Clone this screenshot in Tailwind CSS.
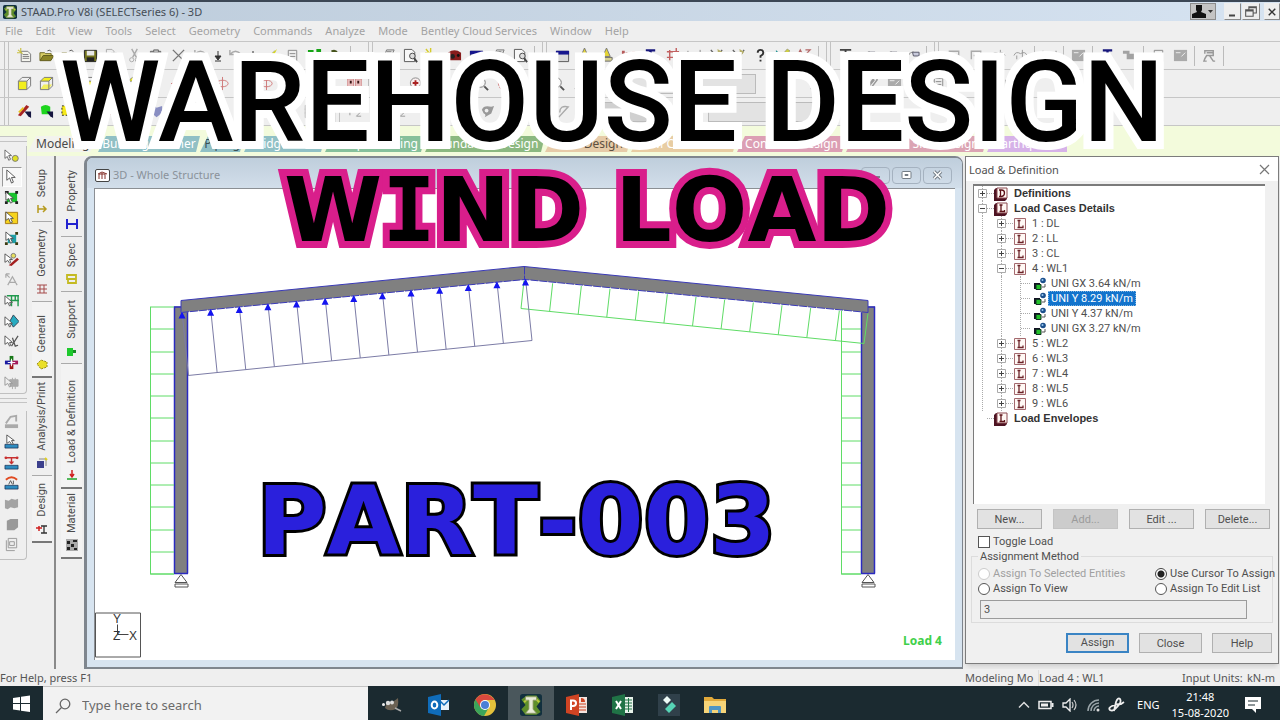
<!DOCTYPE html>
<html lang="en">
<head>
<meta charset="utf-8">
<title>STAAD.Pro V8i (SELECTseries 6) - 3D</title>
<script src="https://cdn.jsdelivr.net/npm/@tailwindcss/browser@4"></script>
</head>
<body class="bg-[#efefef]">
<svg class="hidden" aria-hidden="true">
  <symbol id="i-new" viewBox="0 0 16 16"><path d="M4.500 3.500h7l3 3v8h-10zM6 7h6M6 9h7M6 11h7" fill="#f4f4ee" stroke="#777"/><path d="M1 2l5 4M4 0v5M0 5h5" stroke="#c9c040" stroke-width="1.200"/></symbol>
  <symbol id="i-open" viewBox="0 0 16 16"><path d="M1 13V5h5l1 1h6v2" fill="#d9cf66" stroke="#6d6820"/><path d="M1 13.500 4.500 8H16l-3.500 5.500z" fill="#8d8626" stroke="#5f5a1b"/><path d="M9 3q3-2 4 1" stroke="#555" fill="none"/></symbol>
  <symbol id="i-save" viewBox="0 0 16 16"><path d="M1.500 2.500h13v12h-13z" fill="#74741d" stroke="#222"/><path d="M4 3h8v5H4z" fill="#e8e8e8"/><path d="M4 10h8v4H4z" fill="#222"/></symbol>
  <symbol id="i-copy" viewBox="0 0 16 16"><path d="M1.500 1.500h6l2 2v8h-8zM6.500 5.500h6l2 2v8h-8z" fill="#eee" stroke="#aaa"/></symbol>
  <symbol id="i-cut" viewBox="0 0 16 16"><path d="M5 1l5 9M11 1 6 10" stroke="#aaa" stroke-width="1.500"/><circle cx="5" cy="12.500" r="2.200" fill="none" stroke="#aaa"/><circle cx="11" cy="12.500" r="2.200" fill="none" stroke="#aaa"/></symbol>
  <symbol id="i-paste" viewBox="0 0 16 16"><path d="M1.500 3.500h11v11h-11z" fill="#888" stroke="#666"/><path d="M5 2h5v3H5z" fill="#bbb" stroke="#666"/></symbol>
  <symbol id="i-del" viewBox="0 0 16 16"><path d="M2 2l12 12M14 2 2 14" stroke="#777" stroke-width="1.500"/></symbol>
  <symbol id="i-undo" viewBox="0 0 16 16"><path d="M2 7q6-7 12 0t-6 6M2 2v5h5" fill="none" stroke="#aaa" stroke-width="1.500"/></symbol>
  <symbol id="i-down" viewBox="0 0 8 16"><path d="M4 3v6M1 8h6L4 12zM1 13h6" fill="#333" stroke="#333"/></symbol>
  <symbol id="i-wand" viewBox="0 0 16 16"><path d="M2 14 13 3" stroke="#bbb" stroke-width="2"/><path d="M9 6l6-5-3 6z" fill="#d8d820"/></symbol>
  <symbol id="i-doc" viewBox="0 0 16 16"><path d="M3.500 2.500h9v12h-9zM5 6h6M5 9h6" fill="#eee" stroke="#888"/></symbol>
  <symbol id="i-green" viewBox="0 0 16 16"><path d="M1 2h6v5H1zM10 1h5v5h-5zM1 9h5v5H1z" fill="#16a516"/><path d="M6 8h6v5" stroke="#333" fill="none"/></symbol>
  <symbol id="i-tool" viewBox="0 0 16 16"><path d="M2 3q5-3 8 2l5 8-3 2-5-8q-2 0-5-4z" fill="#46531d"/></symbol>
  <symbol id="i-print" viewBox="0 0 16 16"><path d="M4 7l2-5h8l-2 5M1.500 7.500h12v6h-12zM6 4h5" fill="#ddd" stroke="#777"/></symbol>
  <symbol id="i-prev" viewBox="0 0 16 16"><path d="M1.500 1.500h8l3 3v10h-11z" fill="#f8f8f8" stroke="#555"/><circle cx="10" cy="8.500" r="3" fill="#ddd" stroke="#444"/><path d="M12 11l3 4" stroke="#444" stroke-width="2"/></symbol>
  <symbol id="i-cam" viewBox="0 0 16 16"><path d="M1.500 6.500h13v7h-13z" fill="#ccc" stroke="#777"/><path d="M1 1l4 5M6 0v5M0 5h6" stroke="#d5cb2c" stroke-width="1.500"/><circle cx="9" cy="10" r="2" fill="#777"/></symbol>
  <symbol id="i-red" viewBox="0 0 16 16"><path d="M1 5q7-5 14 0v8H1z" fill="#871c1c"/><circle cx="6" cy="9" r="2.500" fill="#222"/><circle cx="12" cy="8" r="1.500" fill="#111"/></symbol>
  <symbol id="i-win" viewBox="0 0 16 16"><path d="M1.500 3.500h13v11h-13z" fill="#dadada" stroke="#555"/><path d="M1 3h14v4H1z" fill="#16168d"/></symbol>
  <symbol id="i-warn" viewBox="0 0 16 16"><path d="M8 0l4 9H4z" fill="#e5d536" stroke="#777"/><path d="M2 10h12v4H2z" fill="#d7d292" stroke="#666"/></symbol>
  <symbol id="i-dots" viewBox="0 0 16 16"><path d="M1 5h14M1 11h14" stroke="#c58080" stroke-dasharray="2 2"/><path d="M1 3h3v3H1zM12 4h3v3h-3z" fill="#b65b5b"/></symbol>
  <symbol id="i-hash" viewBox="0 0 16 16"><path d="M2 4h13M2 10h13M5 2v11M12 0v13" stroke="#c26060" stroke-width="1.500"/></symbol>
  <symbol id="i-rule" viewBox="0 0 16 16"><path d="M1 3v8M14 2v9M1 8h13" stroke="#888" fill="none"/><path d="M6 5l4 2-4 2z" fill="#888"/></symbol>
  <symbol id="i-pen" viewBox="0 0 16 16"><path d="M2 2l8 10M14 2 7 12" stroke="#666" stroke-width="1.500"/><path d="M9 1l5 3-4 5z" fill="#b7b06a"/></symbol>
  <symbol id="i-q" viewBox="0 0 16 16"><path d="M5 5q0-3 3-3t3 3q0 2-3 3.500V10.500M8 12.500v2" fill="none" stroke="#333" stroke-width="2"/></symbol>
  <symbol id="i-qbox" viewBox="0 0 16 16"><path d="M1.500 1.500h13v13h-13z" fill="#f6f6fb" stroke="#8a8a9a"/><path d="M5.500 6q0-2 2.500-2t2.500 2q0 1.500-2.500 2.500V10M8 11v1.500" fill="none" stroke="#334" stroke-width="1.500"/></symbol>
  <symbol id="i-teal" viewBox="0 0 16 16"><path d="M1 2v13h14z" fill="#2a9595"/><path d="M7 8l6-7 3 2-6 7z" fill="#cfcf44" stroke="#777" stroke-width=".5"/></symbol>
  <symbol id="i-az" viewBox="0 0 16 16"><path d="M1 7l2.500-5L6 7M9 2h5L9 7h5" fill="none" stroke="#b36666" stroke-width="1.300"/></symbol>
  <symbol id="i-beam" viewBox="0 0 16 16"><path d="M1 2h12M7 2v11M4 9l10 4" stroke="#444" stroke-width="2"/><path d="M9 5h6v5H9z" fill="#aeb2d2" stroke="#334"/></symbol>
  <symbol id="i-arc" viewBox="0 0 16 16"><path d="M2 13Q3 5 9 4" stroke="#888" fill="none"/><path d="M8 4.500h7v4H9z" fill="#c8cadb" stroke="#556"/></symbol>
  <symbol id="i-g1" viewBox="0 0 16 16"><path d="M2.500 12V3.500h10V9M5 8h8" fill="none" stroke="#aaa" stroke-width="1.500"/></symbol>
  <symbol id="i-g2" viewBox="0 0 16 16"><path d="M1 8q2-5 7-2 5-3 7 2M4 8v4M10 2v12" fill="none" stroke="#999"/></symbol>
  <symbol id="i-tray" viewBox="0 0 16 16"><path d="M1 3v4q7 5 14 0V3" fill="none" stroke="#aaa" stroke-width="1.500"/></symbol>
  <symbol id="i-gs" viewBox="0 0 16 16"><path d="M1 2h14v12H1z" fill="#aaa"/><path d="M3 5h5M9 9l4-4" stroke="#eee"/></symbol>
  <symbol id="i-ib" viewBox="0 0 16 16"><path d="M3 2.500h10M8 2v12M3 13.500h10" stroke="#17177c" stroke-width="2.500"/></symbol>
  <symbol id="i-bar" viewBox="0 0 16 16"><path d="M1 3h7v3H1zM5 6h10v6H5z" fill="#a2a2a2"/></symbol>
  <symbol id="i-r" viewBox="0 0 16 16"><path d="M3 6V3h9v5H5q-2 3-3 6h3M8 8l4 6h2M5 5h7" fill="none" stroke="#999" stroke-width="1.500"/></symbol>
  <symbol id="i-cubea" viewBox="0 0 16 16"><path d="M1.500 5.500h9v9h-9z" fill="#f2ee1e"/><path d="M1.500 5.500h9v9h-9zM1.500 5.500l4-4h9l-4 4M14.500 1.500v9l-4 4" fill="none" stroke="#777"/></symbol>
  <symbol id="i-cubeb" viewBox="0 0 16 16"><path d="M1.500 5.500l4-4h9l-4 4z" fill="#f2ee1e"/><path d="M5 9h9l-4 5H1.500z" fill="#f2ee1e" opacity=".7"/><path d="M1.500 5.500h9v9h-9zM1.500 5.500l4-4h9l-4 4M14.500 1.500v9l-4 4" fill="none" stroke="#777"/></symbol>
  <symbol id="i-rot" viewBox="0 0 16 16"><ellipse cx="8" cy="8" rx="6" ry="3.500" fill="none" stroke="#cf7777"/><path d="M8 1v14M0 8h5" stroke="#cf7777"/></symbol>
  <symbol id="i-face" viewBox="0 0 16 16"><path d="M0 3h7v9H0zM9 3h7v9H9z" fill="#e8bcbc" stroke="#c88"/><path d="M3 5h2v3H3zM11 5h2v3h-2z" fill="#311"/></symbol>
  <symbol id="i-zin" viewBox="0 0 16 16"><circle cx="8" cy="7.500" r="5.500" fill="#f8eeee" stroke="#888"/><path d="M8 4.500v6M5 7.500h6" stroke="#a22" stroke-width="2"/></symbol>
  <symbol id="i-mag" viewBox="0 0 16 16"><circle cx="7" cy="7" r="5" fill="#fafafa" stroke="#777"/><path d="M11 11l4 4" stroke="#555" stroke-width="2"/></symbol>
  <symbol id="i-redarc" viewBox="0 0 16 16"><path d="M5 2Q0 8 6 14M10 2q5 4 2 9" fill="none" stroke="#d08080" stroke-width="1.500" stroke-dasharray="4 1"/></symbol>
  <symbol id="i-bq" viewBox="0 0 16 16"><path d="M4 1h9v6l-4 3v5H6v-6l3-3H4z" fill="#3a6bb8" stroke="#8c2f5a"/></symbol>
  <symbol id="i-clip" viewBox="0 0 16 16"><path d="M2 12L9 3q3-2 4 1L7 12q-3 2-2-2l5-6" fill="none" stroke="#999" stroke-width="1.500"/></symbol>
  <symbol id="i-plus" viewBox="0 0 16 16"><path d="M6 2h4v4h5v4h-5v5H6v-5H1V6h5z" fill="#999"/></symbol>
  <symbol id="i-gfold" viewBox="0 0 16 16"><path d="M1 4h6l1 2h7v8H1z" fill="#aaa"/><path d="M3 9h12" stroke="#eee"/></symbol>
  <symbol id="i-sla" viewBox="0 0 16 16"><path d="M1 12 10 1l3 2-9 10z" fill="#a72323"/><path d="M2 9l5-5" stroke="#e6c11e" stroke-width="2"/><path d="M8 8h7v7l-3-2z" fill="#161640"/></symbol>
  <symbol id="i-blob" viewBox="0 0 16 16"><path d="M2 3q5-4 10 0v8H3z" fill="#1ed51e"/><path d="M8 8h7v7l-3-2z" fill="#161640"/></symbol>
  <symbol id="i-yel" viewBox="0 0 16 16"><path d="M1 2h10v10H1z" fill="#f5e81b" stroke="#222" stroke-dasharray="2 2"/><path d="M13 5v6M10 8h6" stroke="#222" stroke-width="2"/></symbol>
  <symbol id="i-grid" viewBox="0 0 16 16"><path d="M2.500 1.500h12v13h-12zM2 5.500h12M2 9.500h12M6.500 1v13" fill="#ddd" stroke="#888"/></symbol>
  <symbol id="i-bl" viewBox="0 0 16 16"><path d="M2 4q4-3 6 0l6-2q1 8-6 12-6-4-6-10z" fill="#8a8fc2"/></symbol>
  <symbol id="i-fx" viewBox="0 0 16 16"><path d="M2 3h5M2 3v9M2 7h4M9 8h5l-5 5h5" fill="none" stroke="#999"/></symbol>
  <symbol id="i-g3" viewBox="0 0 16 16"><path d="M2 6q2-5 10-3l3-1-3 8-7 4q2-3-1-4z" fill="#999"/><circle cx="7" cy="7" r="2" fill="#eee"/></symbol>
  <symbol id="i-pin" viewBox="0 0 16 16"><path d="M3 14 13 3q-9-2-9 6" fill="none" stroke="#aaa" stroke-width="1.500"/></symbol>

  <symbol id="c-cur" viewBox="0 0 16 16"><path d="M3 1v11l3-2.500L8 15l2-1-2-5h4z" fill="#fff" stroke="#555"/></symbol>
  <symbol id="c-node" viewBox="0 0 16 16"><path d="M1 1v9l2.500-2L5 12l2-1-2-4h3z" fill="#fff" stroke="#666"/><circle cx="12" cy="10" r="3.200" fill="#e0e024" stroke="#777"/></symbol>
  <symbol id="c-grn" viewBox="0 0 16 16"><path d="M3 3h11v10H3z" fill="#19c32e"/><path d="M1 1h4v3H1zM12 1h3v3h-3zM1 12h3v3H1zM12 12h3v3h-3z" fill="#222"/><path d="M2 2v9l3-2 2 5 2-1-2-4h3z" fill="#fff" stroke="#555"/></symbol>
  <symbol id="c-yel" viewBox="0 0 16 16"><path d="M1.500 2.500h13v12h-13z" fill="#f6d31d" stroke="#a67b15"/><path d="M2 2v9l3-2 2 5 2-1-2-4h3z" fill="#fff" stroke="#555"/></symbol>
  <symbol id="c-teal" viewBox="0 0 16 16"><path d="M4 4h9v9H4z" fill="#1e9fa6"/><path d="M12 1h3v3h-3zM1 12h3v3H1zM12 12h3v3h-3z" fill="#3b3b10"/><path d="M2 1v9l3-2 2 5 2-1-2-4h3z" fill="#fff" stroke="#555"/></symbol>
  <symbol id="c-red" viewBox="0 0 16 16"><path d="M5 14 14 6l2 2-8 7z" fill="#a32020"/><circle cx="10" cy="4" r="2.500" fill="#e6df5d" stroke="#777"/><path d="M1 2v9l3-2 2 3 1-1-1-3h3z" fill="#fff" stroke="#555"/></symbol>
  <symbol id="c-a" viewBox="0 0 16 16"><path d="M2 2l4 4M2 2h4M2 2v4M4 14l5-9 5 9M6 11h7" fill="none" stroke="#aaa" stroke-width="1.300"/></symbol>
  <symbol id="c-bar" viewBox="0 0 16 16"><path d="M3 3h13M6 8h10M8 3v11M12 3v5M15 3v11" fill="none" stroke="#219a4e" stroke-width="1.500"/><path d="M1 3v9l3-2 2 4 1-1-1-3h3z" fill="#fff" stroke="#555"/></symbol>
  <symbol id="c-dia" viewBox="0 0 16 16"><path d="M10 1l6 7-6 6-4-6z" fill="#27abc0" stroke="#345"/><path d="M1 3v9l3-2 2 4 1-1-1-3h3z" fill="#fff" stroke="#555"/></symbol>
  <symbol id="c-y" viewBox="0 0 16 16"><path d="M8 13 15 2M9 4l3 9 3-1" stroke="#555" fill="none" stroke-width="1.300"/><path d="M1 2v9l3-2 2 4 1-1-1-3h3z" fill="#fff" stroke="#555"/></symbol>
  <symbol id="c-plus" viewBox="0 0 16 16"><path d="M8 1v5" stroke="#187818" stroke-width="4"/><path d="M8 10v5" stroke="#a01616" stroke-width="4"/><path d="M1 8h6" stroke="#1a1aa0" stroke-width="4"/><path d="M9 8h6" stroke="#a31b5a" stroke-width="4"/><path d="M8 4v8M4 8h8" stroke="#fff"/></symbol>
  <symbol id="c-gry" viewBox="0 0 16 16"><path d="M6 5h9v7H6zM9 3v12M12 3v12" fill="#aaa" stroke="#aaa"/><path d="M1 2v9l3-2 2 4 1-1-1-3h3z" fill="#eee" stroke="#999"/></symbol>
  <symbol id="c-b1" viewBox="0 0 16 16"><path d="M1 11h14v4H1z" fill="#aaa"/><path d="M2 10 7 3l6-1v6" fill="none" stroke="#aaa" stroke-width="2"/></symbol>
  <symbol id="c-b2" viewBox="0 0 16 16"><path d="M1 11h14v4H1z" fill="#2e8cc0" stroke="#124" stroke-width=".7"/><path d="M3 1v9l3-2 2 3h2L8 7h3z" fill="#fff" stroke="#555"/></symbol>
  <symbol id="c-b3" viewBox="0 0 16 16"><path d="M1 11h14v4H1z" fill="#2e8cc0" stroke="#124" stroke-width=".7"/><path d="M2 3h12M8 3v6" stroke="#c83030" stroke-width="1.500"/><circle cx="2" cy="3" r="1.500" fill="#c83030"/><circle cx="14" cy="3" r="1.500" fill="#c83030"/><path d="M5 7h6l-3 3z" fill="#c83030"/></symbol>
  <symbol id="c-b4" viewBox="0 0 16 16"><path d="M1 11h14v4H1z" fill="#2e8cc0" stroke="#124" stroke-width=".7"/><path d="M2 5q6-5 12 0" fill="none" stroke="#e04a20" stroke-width="2"/><path d="M5 10l2-4 2 4M10 6v4" fill="none" stroke="#555"/></symbol>
  <symbol id="c-b5" viewBox="0 0 16 16"><path d="M1 4l4 1 3-2 4 1 3-1v9l-4 1-4-1-3 2-3-1z" fill="#a3a3a3"/></symbol>
  <symbol id="c-b6" viewBox="0 0 16 16"><path d="M3 4l4-2h8v9l-4 3H3z" fill="#999"/></symbol>
  <symbol id="c-b7" viewBox="0 0 16 16"><path d="M4.500 1.500h9v10h-9zM2.500 3.500v11h9" fill="#eee" stroke="#999"/><path d="M6 5h5v4H6z" fill="none" stroke="#999"/></symbol>

  <symbol id="t-app" viewBox="0 0 16 16"><rect width="16" height="16" rx="2" fill="#12303e"/><path d="M1 4l4-3h7l3 4-3 4 3 4-3 2H4l-3-4 3-3z" fill="#5f8f2a"/><path d="M3 6l3-3M11 3l3 3" stroke="#b9c93a" stroke-width="1.500"/><path d="M4 2h8v2.500H9.500v6.500l2.500 3H4l2.500-3V4.500H4z" fill="#e9ecd8" stroke="#8d9668" stroke-width=".6"/></symbol>
  <symbol id="t-case" viewBox="0 0 12 12"><path d="M.5.500h11v11H.500z" fill="#fff8f4" stroke="#a4696e"/><path d="M3.500 2.500h3M5 2.500v7M3.500 9.500h5.500v-2" fill="none" stroke="#6c2228" stroke-width="1.300"/></symbol>
  <symbol id="t-root" viewBox="0 0 14 14"><path d="M0 3v11h11l2-2V1H2z" fill="#4d1322"/><path d="M3 1h10v10H3z" fill="#fff8f4" stroke="#8c4a50"/><path d="M5.500 3h3M7 3v6.500M5.500 9.500h5V8" fill="none" stroke="#5c1218" stroke-width="1.300"/></symbol>
  <symbol id="t-def" viewBox="0 0 14 14"><path d="M0 3v11h11l2-2V1H2z" fill="#4d1322"/><path d="M3 1h10v10H3z" fill="#fff8f4" stroke="#8c4a50"/><path d="M5 3h2.500q3 0 3 3t-3 3.500H5M6.500 3v6.500" fill="none" stroke="#5c1218" stroke-width="1.300"/></symbol>
  <symbol id="t-leaf" viewBox="0 0 14 14"><path d="M1 6h6v6H1z" fill="#112"/><path d="M3 7.500h5v5H3z" fill="#23c02b" stroke="#132"/><circle cx="10" cy="3.500" r="2.800" fill="#1b4f8c"/><circle cx="9.500" cy="3" r="1" fill="#9cc9ef"/><path d="M12 7v3H9" fill="none" stroke="#555"/></symbol>
</svg>

<div class="relative flex min-h-screen flex-col overflow-hidden bg-[#efefef] font-['Noto_Sans','Open_Sans',sans-serif] text-[#3c3c3c]">

  <header class="flex h-[21px] items-center border-t-2 border-[#3c4755] bg-linear-to-r from-[#bccbda] to-[#d6e3f1] pl-[3px]">
    <svg class="size-[14px]"><use href="#t-app"/></svg>
    <h1 class="ml-1 grow text-[11px] leading-4 text-[#454d56]">STAAD.Pro V8i (SELECTseries 6) - 3D</h1>
    <button aria-label="Account" class="mr-2 flex h-[17px] w-[26px] items-center border border-[#8d8d8d] bg-[#c4c4c4]"><svg viewBox="0 0 24 15" class="h-[15px] w-6"><path d="M5 1h6v5l-1 2 5 2v4H1v-4l5-2-1-2z" fill="#111"/><path d="M17 6h5l-2.500 3z" fill="#333"/></svg></button>
    <button aria-label="Minimise" class="h-[17px] w-[17px] border border-t-[#eee] border-r-[#888] border-b-[#888] border-l-[#eee] bg-[#eee]"><svg viewBox="0 0 15 15"><path d="M4 11.500h6" stroke="#444" stroke-width="2"/></svg></button>
    <button aria-label="Restore" class="mr-1 ml-px h-[17px] w-[18px] border border-t-[#eee] border-r-[#888] border-b-[#888] border-l-[#eee] bg-[#eee]"><svg viewBox="0 0 15 15"><path d="M5.500 5V2.500h7v6H10M2.500 5.500h7v6h-7zM3 6.500h6M6 3.500h6" fill="none" stroke="#555"/></svg></button>
    <button aria-label="Close" class="h-[17px] w-[16px] border border-t-[#eee] border-r-[#888] border-b-[#888] border-l-[#eee] bg-[#eee]"><svg viewBox="0 0 15 15"><path d="M4 4l7 7M11 4l-7 7" stroke="#333" stroke-width="1.500"/></svg></button>
  </header>

  <nav class="flex h-[21px] items-center gap-[13px] border-b border-[#c6c6c6] pl-[5px] text-[11px] leading-4 text-[#a3a3a3]">
    <button>File</button><button>Edit</button><button>View</button><button>Tools</button><button>Select</button><button>Geometry</button><button>Commands</button><button>Analyze</button><button>Mode</button><button>Bentley Cloud Services</button><button>Window</button><button>Help</button>
  </nav>

  <div id="bars"></div>

  <nav class="flex h-[30px] items-end bg-[#f3fbdc] pb-1 pl-[28px] text-[12px] leading-4 text-white">
    <button class="w-[70px] bg-[#f3f3ee] pl-2 text-left text-[#4a4a4a] [clip-path:polygon(8px_0,100%_0,calc(100%-8px)_100%,0_100%)]">Modeling</button>
    <button class="w-[102px] bg-[#90c0c5] [clip-path:polygon(8px_0,100%_0,calc(100%-4px)_100%,0_100%)]">Building Planner</button>
    <button class="w-[44px] bg-[#90c0c5] text-[#3c5054] [clip-path:polygon(8px_0,100%_0,calc(100%-4px)_100%,0_100%)]">Piping</button>
    <button class="w-[81px] bg-[#90c0c5] [clip-path:polygon(8px_0,100%_0,calc(100%-4px)_100%,0_100%)]">Bridge Deck</button>
    <button class="w-[100px] bg-[#86c09b] [clip-path:polygon(8px_0,100%_0,calc(100%-4px)_100%,0_100%)]">Postprocessing</button>
    <button class="w-[120px] bg-[#8bb880] [clip-path:polygon(8px_0,100%_0,calc(100%-4px)_100%,0_100%)]">Foundation Design</button>
    <button class="w-[86px] bg-[#e6cba8] text-[#5d5040] [clip-path:polygon(8px_0,100%_0,calc(100%-4px)_100%,0_100%)]">Steel Design</button>
    <button class="w-[106px] bg-[#e8cda3] [clip-path:polygon(8px_0,100%_0,calc(100%-4px)_100%,0_100%)]">RAM Connection</button>
    <button class="w-[109px] bg-[#dc9fb4] [clip-path:polygon(8px_0,100%_0,calc(100%-4px)_100%,0_100%)]">Concrete Design</button>
    <button class="w-[141px] bg-[#dba4b3] [clip-path:polygon(8px_0,100%_0,calc(100%-4px)_100%,0_100%)]">Advanced Slab Design</button>
    <button class="w-[80px] bg-[#d6b2e8] [clip-path:polygon(8px_0,100%_0,100%_100%,0_100%)]">Earthquake</button>
  </nav>

  <main class="flex grow">
    <aside class="-mt-[20px] w-[27px] shrink-0">
      <div class="border-t border-[#c4c4c4] bg-[#efefef]"><div class="mt-1 h-[5px] border-t border-[#c4c4c4]"></div></div>
      <div id="tools1" class="flex h-[248px] flex-col items-center justify-between rounded-br border-r border-b border-[#c0c0c0] bg-[#efefef] pr-[3px]"></div>
      <div class="mt-1 h-[5px] border-y border-[#c4c4c4]"></div>
      <div id="tools2" class="mt-2 flex h-[149px] flex-col items-center justify-between rounded-br border-r border-b border-[#c0c0c0] pr-[3px] pb-1"></div>
    </aside>

    <nav id="tabsA" class="flex w-[29px] shrink-0 flex-col border-r-2 border-[#8a8a8a] pt-1 pr-0.5 pl-[5px]"></nav>
    <nav id="tabsB" class="flex w-[28px] shrink-0 flex-col pt-0.5 pr-0.5 pl-[5px]"></nav>

    <section class="flex grow flex-col rounded-t-lg border-t-2 border-r border-b-2 border-l-[3px] border-[#7f868e] bg-[#d7e4f0] px-[7px] pb-[7px]">
      <header class="-mx-[7px] flex h-[30px] items-center rounded-t-md bg-linear-to-b from-[#bfcedc] to-[#d2deea] pt-1 pr-[10px] pl-[8px] text-[11px] text-[#8a929a]">
        <svg viewBox="0 0 15 13" class="mr-[3px] h-[13px] w-[15px]"><rect x=".5" y=".5" width="14" height="12" rx="1.500" fill="#fff" stroke="#444"/><path d="M4 10V5h6v5M7 4v6M3 5l4-2 5 2" fill="none" stroke="#84302a"/></svg>
        <h2 class="grow">3D - Whole Structure</h2>
        <div class="flex gap-0.5">
          <button aria-label="Minimise view" class="h-[17px] w-[29px] rounded-sm border border-[#a5b2c0]"><svg viewBox="0 0 27 15"><path d="M10 9h8" stroke="#7a838c" stroke-width="2"/></svg></button>
          <button aria-label="Maximise view" class="h-[17px] w-[29px] rounded-sm border border-[#a5b2c0]"><svg viewBox="0 0 27 15"><rect x="9" y="3.500" width="9" height="7" rx="1" fill="#fff" stroke="#737c85"/><path d="M12 6.500h3v1h-3z" stroke="#737c85"/></svg></button>
          <button aria-label="Close view" class="h-[17px] w-[29px] rounded-sm border border-[#a5b2c0]"><svg viewBox="0 0 27 15"><path d="M10 3.500l7 7M17 3.500l-7 7" stroke="#737c85" stroke-width="3.500"/><path d="M10 3.500l7 7M17 3.500l-7 7" stroke="#fff" stroke-width="1.500"/></svg></button>
        </div>
      </header>
      <div class="grow border-t border-l border-[#8b8f94] bg-white">
        <svg id="model" viewBox="95 189 860 470" class="block h-full w-full" role="img" aria-label="Portal frame with wind load">
          <path d="M174 306h14v267h-14zM861 306h14v267h-14z" fill="#808080"/>
          <path d="M174.500 306v267M187.500 312v261M861.500 312v261M874.500 306v267M174 306.500h7M868 306.500h7M174 573h14M861 573h14" stroke="#2a2ac0" stroke-width="1.500"/>
          <path d="M181 300 524 266 868 300v12L525 279 181 312z" fill="#808080"/>
          <path d="M181 312V300L524 266 868 300v12" fill="none" stroke="#3a3ab8"/>
          <path d="M181 312 525 279 868 312M524.500 266v13" fill="none" stroke="#3a3ab8" stroke-dasharray="8 1"/>
          <g id="loads" fill="none"></g>
          <g fill="#fff" stroke="#555"><path d="M181 574l6 8h-12zM175 583.500h13v3h-13zM868 574l6 8h-12zM862 583.500h13v3h-13z"/></g>
          <path d="M95.500 612.500h45v44h-45z" fill="#fff" stroke="#555"/>
          <path d="M117.500 624v10h11" fill="none" stroke="#444"/>
          <g fill="#333" font-family="Liberation Sans" font-size="12"><text x="113" y="622">Y</text><text x="113" y="639">Z</text><text x="129" y="639">X</text></g>
          <text x="903" y="644" fill="#3fd04a" font-family="Noto Sans" font-weight="700" font-size="12">Load 4</text>
        </svg>
      </div>
    </section>

    <section class="mr-px mb-[5px] ml-0.5 flex w-[314px] shrink-0 flex-col border border-[#7c7c7c] bg-[#f0f0f0] font-['Roboto',Arial,sans-serif] text-[11px] leading-[15px] text-[#4f4f4f] shadow-md">
      <header class="flex h-6 items-center justify-between bg-white pr-2 pl-[3px] font-['Noto_Sans',sans-serif]">
        <h2>Load &amp; Definition</h2>
        <button aria-label="Close panel" class="size-[11px]"><svg viewBox="0 0 11 11"><path d="M1 1l9 9M10 1l-9 9" stroke="#777" stroke-width="1.200"/></svg></button>
      </header>
      <div class="mt-[3px] mr-[13px] ml-[7px] h-[320px] border-t-2 border-l border-[#7b7b7b] bg-white pl-1">
        <ul id="tree"></ul>
      </div>
      <div class="mt-[5px] mr-2 ml-[11px] flex justify-between">
        <button class="h-5 w-[65px] border border-[#b0b0b0] bg-[#e2e2e2]">New...</button>
        <button disabled class="h-5 w-[65px] border border-[#c4c4c4] bg-[#cccccc] text-[#9b9b9b]">Add...</button>
        <button class="h-5 w-[65px] border border-[#b0b0b0] bg-[#e2e2e2]">Edit ...</button>
        <button class="h-5 w-[65px] border border-[#b0b0b0] bg-[#e2e2e2]">Delete...</button>
      </div>
      <label class="mt-[5px] ml-3 flex h-[15px] items-center gap-[3px]"><input type="checkbox" class="size-3 appearance-none border border-[#555] bg-white">Toggle Load</label>
      <fieldset class="mr-[5px] ml-[5px] min-w-0 border border-[#dcdcdc] pb-[3px] pl-[6px]">
        <legend class="px-0.5">Assignment Method</legend>
        <div class="mt-0.5 grid grid-cols-[177px_1fr]">
          <label class="flex items-center gap-[3px] whitespace-nowrap text-[#a0a0a0]"><input type="radio" name="m" disabled class="size-3 appearance-none rounded-full border border-[#ccc] bg-white">Assign To Selected Entities</label>
          <label class="flex items-center gap-[3px] whitespace-nowrap"><input type="radio" name="m" checked class="size-3 appearance-none rounded-full border border-[#444] bg-[radial-gradient(circle,#222_3px,white_4px)]">Use Cursor To Assign</label>
          <label class="flex items-center gap-[3px] whitespace-nowrap"><input type="radio" name="m" class="size-3 appearance-none rounded-full border border-[#555] bg-white">Assign To View</label>
          <label class="flex items-center gap-[3px] whitespace-nowrap"><input type="radio" name="m" class="size-3 appearance-none rounded-full border border-[#555] bg-white">Assign To Edit List</label>
        </div>
        <input aria-label="Members" value="3" class="mt-1 ml-0.5 block h-[19px] w-[267px] border border-[#9b9b9b] bg-[#ededed] px-[3px]">
      </fieldset>
      <div class="mt-[10px] mr-[6px] flex justify-end gap-[10px]">
        <button class="h-5 w-[63px] border-2 border-[#3a84c4] bg-[#e2e2e2] leading-4">Assign</button>
        <button class="h-5 w-[63px] border border-[#b0b0b0] bg-[#e2e2e2]">Close</button>
        <button class="h-5 w-[60px] border border-[#b0b0b0] bg-[#e2e2e2]">Help</button>
      </div>
    </section>
  </main>

  <footer class="flex h-[17px] items-center bg-[#efefef] text-[11px] leading-4 text-[#555]">
    <span class="grow">For Help, press F1</span>
    <span class="w-[69px] overflow-hidden whitespace-nowrap">Modeling Mo</span>
    <span class="ml-1 w-[144px] border-l border-[#ddd]">Load 4 : WL1</span>
    <span class="w-[65px] whitespace-nowrap">Input Units:</span>
    <span class="w-[33px] whitespace-nowrap">kN-m</span>
  </footer>

  <footer class="flex h-[34px] items-stretch bg-[#1b2a30] text-white">
    <button aria-label="Start" class="flex w-[43px] items-center justify-center"><svg viewBox="0 0 17 17" class="size-[17px]"><path d="M0 3l7-1v6H0zM8 1.800 17 .5V8H8zM0 9h7v6.500l-7-1zM8 9h9v8l-9-1.300z" fill="#fff"/></svg></button>
    <label class="flex w-[325px] items-center border-t border-[#c4c4c4] bg-[#f2f2f2] pt-1 pl-3">
      <svg viewBox="0 0 16 16" class="size-4"><circle cx="10" cy="6" r="4.800" fill="none" stroke="#666" stroke-width="1.300"/><path d="M6.500 9.500 1 15" stroke="#666" stroke-width="1.300"/></svg>
      <input aria-label="Search" placeholder="Type here to search" class="ml-[11px] grow bg-transparent text-[13px] placeholder:text-[#6b6b6b]">
    </label>
    <div class="flex grow">
      <button aria-label="GIMP" class="flex w-[48px] items-center justify-center pt-1"><svg viewBox="0 0 22 16" class="h-4 w-[22px]"><path d="M6 5q4 2 11-4 1 8-2 11-7 3-11-1z" fill="#6b6153"/><circle cx="7" cy="6" r="2.200" fill="#ddd"/><circle cx="11" cy="5.500" r="2" fill="#ddd"/><circle cx="2.500" cy="7.500" r="1.500" fill="#eee"/><path d="M14 11l6 3" stroke="#aaa" stroke-width="1.500"/></svg></button>
      <button aria-label="Outlook" class="flex w-[46px] items-center justify-center pt-1"><svg viewBox="0 0 22 22" class="size-[22px]"><path d="M11 6h10v10H11z" fill="#e8f2fa"/><path d="M11 6l5 5 5-5" fill="none" stroke="#0f6cba" stroke-width="1.500"/><path d="M0 3l13-3v22L0 19z" fill="#0f6cba"/><ellipse cx="6.500" cy="11" rx="2.800" ry="3.500" fill="none" stroke="#fff" stroke-width="2"/></svg></button>
      <button aria-label="Chrome" class="flex w-[46px] items-center justify-center pt-1"><svg viewBox="0 0 22 22" class="size-[22px]"><circle cx="11" cy="11" r="11" fill="#e3c13b"/><path d="M11 11 1.500 5.500A11 11 0 0 0 10 22l5-8.700z" fill="#3ba45b"/><path d="M1.500 5.500A11 11 0 0 1 20.500 6H11l-4.500 7.500z" fill="#d9493e"/><circle cx="11" cy="11" r="5" fill="#fff"/><circle cx="11" cy="11" r="4" fill="#4b7fd6"/></svg></button>
      <button aria-label="STAAD.Pro" class="flex w-[46px] items-center justify-center bg-[#4a575c] pt-1"><svg class="size-[22px]"><use href="#t-app"/></svg></button>
      <button aria-label="PowerPoint" class="flex w-[46px] items-center justify-center pt-1"><svg viewBox="0 0 22 22" class="size-[22px]"><path d="M11 3h10v16H11z" fill="#f3e4df"/><path d="M13 10h7M13 13h7M13 16h7" stroke="#d04423"/><path d="M15 4v4h4a4 4 0 0 0-4-4z" fill="#d04423"/><path d="M0 3l13-3v22L0 19z" fill="#d04423"/><path d="M5 16V6.500h2q3 0 3 2.700T7 12H5" fill="none" stroke="#fff" stroke-width="2"/></svg></button>
      <button aria-label="Excel" class="flex w-[46px] items-center justify-center pt-1"><svg viewBox="0 0 22 22" class="size-[22px]"><path d="M11 3h10v16H11z" fill="#e8f2ea"/><path d="M13 6h7M13 9h7M13 12h7M13 15h7M16.500 4v14" stroke="#207346"/><path d="M0 3l13-3v22L0 19z" fill="#207346"/><path d="M4 7l5 8M9 7l-5 8" stroke="#fff" stroke-width="2"/></svg></button>
      <button aria-label="Filmora" class="flex w-[46px] items-center justify-center pt-1"><svg viewBox="0 0 22 22" class="size-[22px]"><path d="M0 0h22v22H0z" fill="#30404a"/><path d="M5 6l4-4 4 4-4 4z" fill="#eefaf6"/><path d="M7 15l7-7 4 4-7 7z" fill="#57d3b5"/></svg></button>
      <button aria-label="File Explorer" class="flex w-[46px] items-center justify-center pt-1"><svg viewBox="0 0 22 18" class="h-[18px] w-[22px]"><path d="M0 1h8l2 2h12v14H0z" fill="#e2a93a"/><path d="M0 5h22v12H0z" fill="#f6d478"/><path d="M5 17v-6q0-1 1-1h10q1 0 1 1v6h-3v-3H8v3z" fill="#4f95c4"/></svg></button>
    </div>
    <div class="flex items-center gap-2 pt-1 pr-[19px] text-[12px] leading-4">
      <svg viewBox="0 0 12 12" class="size-3"><path d="M1 8.500l5-5 5 5" fill="none" stroke="#ddd" stroke-width="1.500"/></svg>
      <svg viewBox="0 0 16 10" class="h-[10px] w-4"><path d="M1 1.500h12v7H1z" fill="none" stroke="#eee" stroke-width="1.500"/><path d="M3 3.500h7v3H3z" fill="#eee"/><path d="M14.500 3v4" stroke="#eee" stroke-width="2"/></svg>
      <svg viewBox="0 0 16 14" class="h-[14px] w-4"><path d="M1 5h3l4-4v12L4 9H1z" fill="none" stroke="#eee" stroke-width="1.300"/><path d="M10 4q2 3 0 6M12 2q4 5 0 10" fill="none" stroke="#ccc" stroke-width="1.200"/></svg>
      <svg viewBox="0 0 14 14" class="size-[14px]"><path d="M2 13A11 11 0 0 1 13 2M5 13a8 8 0 0 1 8-8M8 13a5 5 0 0 1 5-5" fill="none" stroke="#9aa5a9" stroke-width="1.500"/><circle cx="12" cy="12" r="1.500" fill="#ddd"/></svg>
      <svg viewBox="0 0 17 16" class="h-4 w-[17px]"><path d="M6 14l2-9q2-5 4-3 2 3-3 8-4 5-7 3-2-2 2-4t9-2l3-2" fill="none" stroke="#eee" stroke-width="1.800"/></svg>
      <span class="ml-1 text-[11px]">ENG</span>
      <span class="ml-1 text-center text-[11px]"><time class="block">21:48</time><time class="block">15-08-2020</time></span>
      <svg viewBox="0 0 16 16" class="ml-2 size-4"><path d="M0 0h16v12h-5v4l-4-4H0z" fill="#fff"/><path d="M3 4h10M3 8h7" stroke="#1b2a30"/></svg>
    </div>
  </footer>

  <p class="pointer-events-none absolute top-[47px] left-[60px] text-[114px] leading-[110px] font-medium whitespace-nowrap text-black font-['Roboto',sans-serif] [paint-order:stroke_fill] [-webkit-text-stroke:16px_white] [stroke-linejoin:round]">WAREHOUSE DESIGN</p>
  <p class="pointer-events-none absolute top-[155px] left-[284px] text-[89px] leading-[110px] font-bold whitespace-nowrap text-black font-['DejaVu_Sans',sans-serif] [font-kerning:none] [paint-order:stroke_fill] [-webkit-text-stroke:14px_#d91e8b] [stroke-linejoin:round]">W<span class="font-['DejaVu_Sans_Mono',monospace]">I</span>ND LOAD</p>
  <p class="pointer-events-none absolute top-[466px] left-[257px] text-[95px] leading-[110px] font-bold whitespace-nowrap text-[#2a20dc] font-['DejaVu_Sans',sans-serif] [font-kerning:none] [paint-order:stroke_fill] [-webkit-text-stroke:6px_black] [stroke-linejoin:round]">PART-003</p>
</div>

<script>
const icon = (id, cls) => `<svg class="${cls}" viewBox="0 0 16 16"><use href="#${id}"/></svg>`;
const grip = '<span class="mx-1 flex w-[5px] justify-between self-stretch border-x border-[#c2c2c2]"></span>';
const sep = '<span class="mx-[3px] h-5 w-px bg-[#bbb]"></span>';
const combo = '<select aria-label="Value" class="mx-1 h-5 w-[130px] appearance-none border border-[#bbb] bg-[#e3e3e3]"></select>';
const small = '<select aria-label="Load case" class="mx-1 h-5 w-[80px] appearance-none border border-[#bbb] bg-[#d0d0d0]"></select>';
const gap = '<span class="w-[22px] shrink-0"></span>';
const half = '<span class="w-[10px] shrink-0"></span>';
const rows = [
  '# new open open save copy cut paste del undo down redo down wand doc green tool | . # print prev cam red win print prev | # win warn warn dots ib hash rule pen pen q teal az | # beam arc arc arc | # g1 g1 g2 g2 | tray | gs | ib bar | doc gs | r |',
  '# cubea cubeb cubea cubea cubeb cubeb _ rot rot rot rot rot _ red _ face | zin . zin _ _ mag redarc _ . mag pin _ . = bq _ pin _ # clip gs plus doc | pin gfold gfold',
  '# sla blob yel yel sla _ bl bl _ _ _ _ _ grid . # fx _ fx _ _ g3 g3 _ . pin pin . - . qbox = g3'
];
document.getElementById('bars').innerHTML = rows.map(r =>
  '<div class="flex h-7 items-center overflow-hidden border-b border-[#c6c6c6]">' + r.split(' ').map(t =>
    t === '#' ? grip : t === '|' ? sep : t === '=' ? combo : t === '-' ? small : t === '_' ? gap : t === '.' ? half :
    t === 'down' ? '<button aria-label="More" class="w-[13px] shrink-0"><svg class="mx-auto h-4 w-2"><use href="#i-down"/></svg></button>' :
    `<button aria-label="${t}" class="w-[22px] shrink-0">${icon(t === 'redo' ? 'i-undo' : 'i-' + t, 'mx-auto size-[15px]')}</button>`
  ).join('') + '</div>').join('');

const tools = (el, list) => document.getElementById(el).innerHTML = list.split(' ').map(t =>
  `<button aria-label="${t}" class="${t === 'cur' ? 'flex size-5 items-center justify-center border border-t-[#999] border-l-[#999] border-r-white border-b-white bg-[#f7f7f7]' : 'flex size-5 items-center justify-center'}">${icon('c-' + t, 'size-[15px]')}</button>`).join('');
tools('tools1', 'node cur grn yel teal red a bar dia y plus gry');
tools('tools2', 'b1 b2 b3 b4 b5 b6 b7');

const tab = ([label, h, art, on]) => `<button class="${on ? 'flex flex-col items-center justify-end gap-[6px] border-b-2 border-[#777] bg-[#f3f3f3] pb-[6px]' : 'flex flex-col items-center justify-end gap-[6px] border-b border-[#aaa] pb-[6px]'}" style="height:${h}px"><span class="rotate-180 text-[11px] leading-4 whitespace-nowrap text-[#4a4a4a] [writing-mode:vertical-rl] font-['Roboto',sans-serif]">${label}</span><svg viewBox="0 0 12 12" class="size-3 shrink-0">${art}</svg></button>`;
document.getElementById('tabsA').innerHTML = [
  ['Setup', 62, '<path d="M2 2v8M2 6h8M7 3l3 3-3 3" fill="none" stroke="#b69a1e" stroke-width="1.500"/>'],
  ['Geometry', 80, '<path d="M1 2h10M1 10h10M4 2v8M8 2v8M1 6h10" stroke="#a54a4a"/>'],
  ['General', 76, '<path d="M1 6l4-4 6 2v5l-6 2z" fill="#eadf28" stroke="#998d1b" stroke-dasharray="2 1"/>', 1],
  ['Analysis/Print', 98, '<path d="M1 4h7v7H1z" fill="#3b3f8c"/><path d="M3 2h7v7" fill="none" stroke="#888"/><path d="M9 1l2 2" stroke="#dfcf20" stroke-width="2"/>'],
  ['Design', 67, '<path d="M5 10h6M8 3v7M5 3h6" stroke="#333" stroke-width="1.300"/><path d="M0 5h6M3 3v5" stroke="#d02020" stroke-width="1.500"/>', 1]
].map(tab).join('');
document.getElementById('tabsB').innerHTML = [
  ['Property', 79, '<path d="M1 1v10M11 1v10M1 6h10" stroke="#2323d0" stroke-width="2"/>'],
  ['Spec', 55, '<path d="M1 2h9v4H1zM2 6h8v4H2z" fill="none" stroke="#c4ba22" stroke-width="1.800"/>'],
  ['Support', 72, '<path d="M1 3h6v8H1z" fill="#1ec92d"/><path d="M7 5h3v3H7z" fill="#188f24"/>'],
  ['Load &amp; Definition', 125, '<path d="M1 10h10" stroke="#1ea52a" stroke-width="1.500"/><path d="M6 1v6M4 5l2 3 2-3" stroke="#d02020" stroke-width="1.500" fill="none"/>', 1],
  ['Material', 70, '<path d="M0 0h12v12H0z" fill="#aaa"/><path d="M1 2h3v3H1zM7 1h4v2H7zM5 5h3v3H5zM1 8h3v3H1zM8 9h3v2H8z" fill="#222"/>', 1]
].map(tab).join('');

/* load tree */
const exp = s => `<span class="flex w-[9px] shrink-0 flex-col items-center self-stretch"><i class="grow border-l border-dotted border-[#aaa]"></i><svg viewBox="0 0 9 9" class="size-[9px]"><path d="M.5.500h8v8h-8z" fill="#fff" stroke="#aaa"/><path d="${s === '+' ? 'M2 4.500h5M4.500 2v5' : 'M2 4.500h5'}" stroke="#444"/></svg><i class="grow border-l border-dotted border-[#aaa]"></i></span>`;
const dash = '<i class="w-[7px] shrink-0 border-t border-dotted border-[#aaa]"></i>';
const root = (s, ic, t) => `<div class="flex h-[15px] items-center">${s ? exp(s) : '<i class="w-[9px]"></i>'}${dash}<svg class="size-[14px] shrink-0"><use href="#${ic}"/></svg><b class="ml-[6px] text-[#333] font-['Liberation_Sans',Arial,sans-serif]">${t}</b></div>`;
const item = (s, t) => `<div class="flex h-[15px] items-center">${exp(s)}${dash}<svg class="ml-px size-3 shrink-0"><use href="#t-case"/></svg><span class="ml-[6px]">${t}</span></div>`;
const leaf = (t, on) => `<li class="flex h-[15px] items-center"><i class="w-[9px] shrink-0 border-t border-dotted border-[#aaa]"></i><svg class="ml-[3px] size-[14px] shrink-0"><use href="#t-leaf"/></svg><span class="${on ? 'ml-px bg-[#1273cc] px-[3px] text-white outline outline-dotted outline-[#7fb3e0] -outline-offset-1' : 'ml-1'}">${t}</span></li>`;
document.getElementById('tree').innerHTML =
  `<li>${root('+', 't-def', 'Definitions')}</li><li>${root('-', 't-root', 'Load Cases Details')}<ul class="ml-1 border-l border-dotted border-[#aaa] pl-[14px]">` +
  ['1 : DL', '2 : LL', '3 : CL'].map(t => `<li>${item('+', t)}</li>`).join('') +
  `<li>${item('-', '4 : WL1')}<div class="ml-1 border-l border-dotted border-[#aaa] pl-[18px]"><ul class="border-l border-dotted border-[#aaa]">` +
  leaf('UNI GX 3.64 kN/m') + leaf('UNI Y 8.29 kN/m', 1) + leaf('UNI Y 4.37 kN/m') + leaf('UNI GX 3.27 kN/m') + '</ul></div></li>' +
  ['5 : WL2', '6 : WL3', '7 : WL4', '8 : WL5', '9 : WL6'].map(t => `<li>${item('+', t)}</li>`).join('') +
  `</ul></li><li>${root('', 't-root', 'Load Envelopes')}</li>`;

/* distributed loads: 12 equal divisions on every member */
let green = 'M150.500 306.500V573.500H174M841.500 310V573.500H861M521 308 864 343', blue = 'M188 375 532 340', heads = '';
for (let i = 0; i <= 12; i++) {
  const f = i / 12, y = Math.round(306 + f * 267) + 0.5;
  green += `M150 ${y}H174` + (i ? `M841 ${y}H861` : '');
  green += `M${524 + f * 344} ${280 + f * 33}L${521 + f * 343} ${308 + f * 35}`;
  const x = 182 + f * 343.5, t = 311 - f * 33;
  blue += `M${x} ${t}L${188.5 + f * 343.5} ${375 - f * 35}`;
  heads += `M${x} ${t}l3.500 7h-7z`;
}
document.getElementById('loads').innerHTML = `<path d="${green}" stroke="#5fdc66"/><path d="${blue}" stroke="#7c7ca6"/><path d="${heads}" fill="#1414f0"/>`;
</script>
</body>
</html>
